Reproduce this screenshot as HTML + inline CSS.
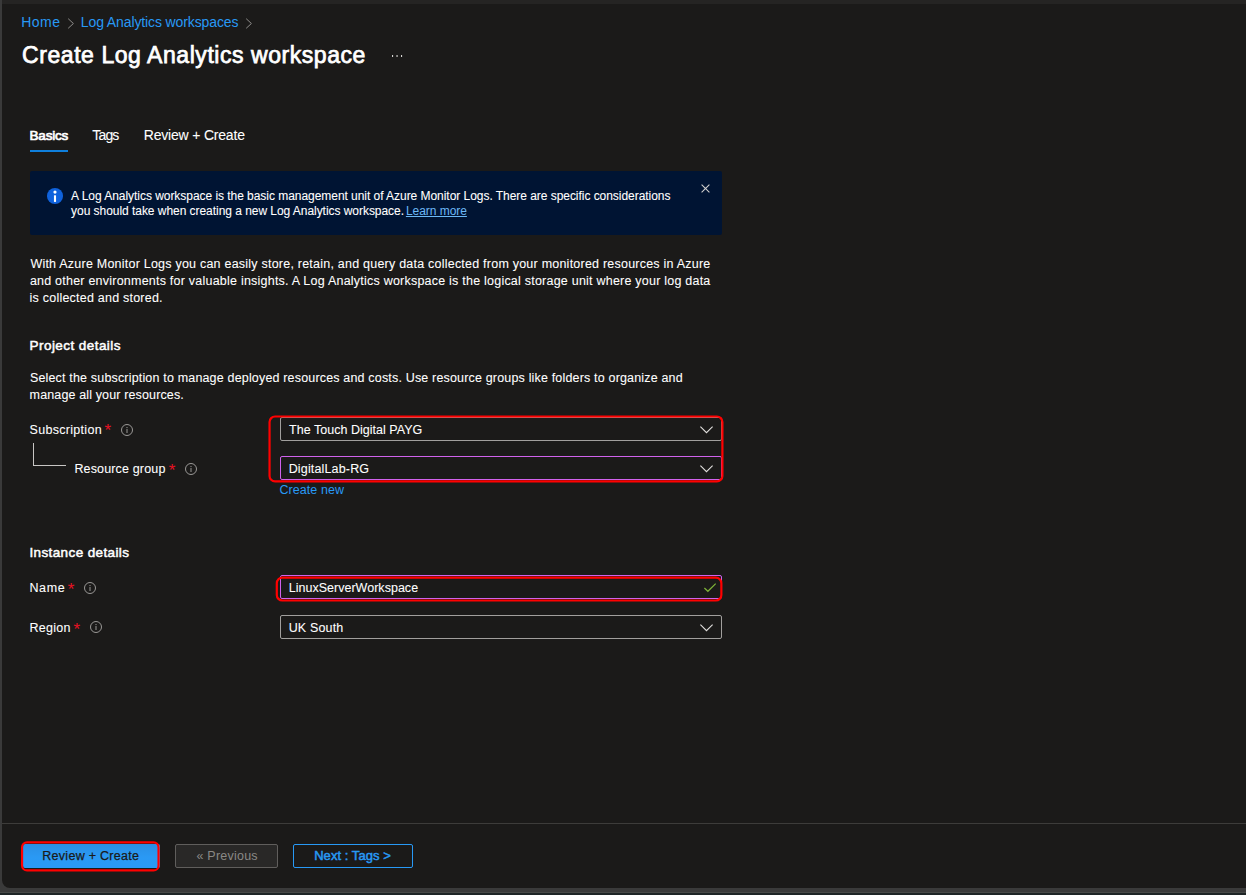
<!DOCTYPE html>
<html lang="en">
<head>
<meta charset="utf-8">
<title>Create Log Analytics workspace</title>
<style>
html,body{margin:0;padding:0;}
body{width:1246px;height:895px;overflow:hidden;background:#1b1a19;position:relative;font-family:"Liberation Sans",sans-serif;}
.abs{position:absolute;}
.t{position:absolute;white-space:pre;line-height:20px;font-family:"Liberation Sans",sans-serif;}
.inp{position:absolute;box-sizing:border-box;height:24px;left:280px;width:442px;border:1px solid #a19f9d;border-radius:2px;background:#1b1a19;}
.red{position:absolute;box-sizing:border-box;border:2.3px solid #ff0000;border-radius:6.5px;}
svg{position:absolute;overflow:visible;}
</style>
</head>
<body>
<!-- window chrome strips -->
<div class="abs" style="left:0;top:0;width:1246px;height:4px;background:#252423;"></div>
<div class="abs" style="left:0;top:888px;width:1246px;height:4px;background:#3a3a3a;"></div>
<div class="abs" style="left:0;top:892px;width:1246px;height:1px;background:#474948;"></div>
<div class="abs" style="left:0;top:893px;width:1246px;height:2px;background:#1e2526;"></div>
<div class="abs" style="left:0;top:0;width:2px;height:892px;background:#3a3a3a;"></div>
<!-- bottom-left rounded corner -->
<div class="abs" style="left:2px;top:880px;width:8px;height:8px;background:#3a3a3a;"></div>
<div class="abs" style="left:2px;top:872px;width:16px;height:16px;border-radius:0 0 0 8px;background:#1b1a19;"></div>

<!-- breadcrumb chevrons -->
<svg style="left:67px;top:17.5px" width="8" height="12" viewBox="0 0 8 12"><path d="M1.2 0.7 L6.4 5.5 L1.2 10.3" fill="none" stroke="#8f8d8b" stroke-width="1"/></svg>
<svg style="left:245.3px;top:17.5px" width="8" height="12" viewBox="0 0 8 12"><path d="M1.2 0.7 L6.4 5.5 L1.2 10.3" fill="none" stroke="#8f8d8b" stroke-width="1"/></svg>

<!-- ellipsis -->
<svg style="left:390px;top:53px" width="14" height="6" viewBox="0 0 14 6"><rect x="2" y="2" width="1.1" height="2" fill="#d6d4d2"/><rect x="6.5" y="2" width="1.1" height="2" fill="#d6d4d2"/><rect x="11" y="2" width="1.1" height="2" fill="#d6d4d2"/></svg>

<!-- tab underline -->
<div class="abs" style="left:30px;top:150px;width:38px;height:2px;background:#0f7fdc;"></div>

<!-- info box -->
<div class="abs" style="left:30px;top:171px;width:692px;height:64px;background:#001433;border-radius:2px;"></div>
<svg style="left:47px;top:188px" width="16" height="16" viewBox="0 0 16 16"><circle cx="8" cy="8" r="8.05" fill="#0f62dc"/><rect x="6.95" y="7.3" width="2.1" height="6.6" fill="#fff"/><circle cx="8" cy="4.1" r="1.6" fill="#fff"/></svg>
<svg style="left:700.5px;top:183.5px" width="9" height="9" viewBox="0 0 9 9"><path d="M0.6 0.6 L8.4 8.4 M8.4 0.6 L0.6 8.4" fill="none" stroke="#d2d0ce" stroke-width="1.05"/></svg>

<!-- tree connector -->
<div class="abs" style="left:33px;top:443px;width:33px;height:22.5px;box-sizing:border-box;border-left:1px solid #c8c6c4;border-bottom:1px solid #c8c6c4;"></div>

<!-- required asterisks -->
<span class="t" style="left:104.4px;top:421px;font-size:17px;color:#e81123;">*</span>
<span class="t" style="left:168.8px;top:461px;font-size:17px;color:#e81123;">*</span>
<span class="t" style="left:67.7px;top:580px;font-size:17px;color:#e81123;">*</span>
<span class="t" style="left:73.5px;top:620px;font-size:17px;color:#e81123;">*</span>

<!-- info (i) icons -->
<svg style="left:121px;top:424px" width="12" height="12" viewBox="0 0 12 12"><circle cx="6" cy="6" r="5.5" fill="none" stroke="#9a9896" stroke-width="1"/><rect x="5.5" y="5" width="1" height="4" fill="#9a9896"/><rect x="5.5" y="3" width="1" height="1.1" fill="#9a9896"/></svg>
<svg style="left:185px;top:463px" width="12" height="12" viewBox="0 0 12 12"><circle cx="6" cy="6" r="5.5" fill="none" stroke="#9a9896" stroke-width="1"/><rect x="5.5" y="5" width="1" height="4" fill="#9a9896"/><rect x="5.5" y="3" width="1" height="1.1" fill="#9a9896"/></svg>
<svg style="left:84px;top:582px" width="12" height="12" viewBox="0 0 12 12"><circle cx="6" cy="6" r="5.5" fill="none" stroke="#9a9896" stroke-width="1"/><rect x="5.5" y="5" width="1" height="4" fill="#9a9896"/><rect x="5.5" y="3" width="1" height="1.1" fill="#9a9896"/></svg>
<svg style="left:90px;top:621px" width="12" height="12" viewBox="0 0 12 12"><circle cx="6" cy="6" r="5.5" fill="none" stroke="#9a9896" stroke-width="1"/><rect x="5.5" y="5" width="1" height="4" fill="#9a9896"/><rect x="5.5" y="3" width="1" height="1.1" fill="#9a9896"/></svg>

<!-- inputs -->
<div class="inp" style="top:417px;"></div>
<div class="inp" style="top:456px;border-color:#d062ec;"></div>
<div class="inp" style="top:575px;border-color:#d062ec;"></div>
<div class="inp" style="top:615px;"></div>

<!-- dropdown chevrons -->
<svg style="left:700px;top:425.5px" width="13" height="8" viewBox="0 0 13 8"><path d="M0.4 0.6 L6.5 6.7 L12.6 0.6" fill="none" stroke="#e1dfdd" stroke-width="1.1"/></svg>
<svg style="left:700px;top:464.5px" width="13" height="8" viewBox="0 0 13 8"><path d="M0.4 0.6 L6.5 6.7 L12.6 0.6" fill="none" stroke="#e1dfdd" stroke-width="1.1"/></svg>
<svg style="left:700px;top:623.8px" width="13" height="8" viewBox="0 0 13 8"><path d="M0.4 0.6 L6.5 6.7 L12.6 0.6" fill="none" stroke="#e1dfdd" stroke-width="1.1"/></svg>
<!-- green check -->
<svg style="left:704px;top:582.5px" width="12" height="9" viewBox="0 0 12 9"><path d="M0.4 5 L3.9 8.3 L11.7 0.6" fill="none" stroke="#7fb239" stroke-width="1.2"/></svg>

<!-- footer -->
<div class="abs" style="left:2px;top:823px;width:1244px;height:1px;background:#3d3c3a;"></div>
<div class="abs" style="left:23px;top:844px;width:137px;height:24px;background:linear-gradient(#2a8fe4,#2a99f4 55%,#2a9af6);border-radius:2px;"></div>
<div class="abs" style="left:175px;top:844px;width:103px;height:24px;box-sizing:border-box;background:#292827;border:1px solid #605e5c;border-radius:2px;"></div>
<div class="abs" style="left:293px;top:844px;width:120.2px;height:24px;box-sizing:border-box;border:1px solid #2899f5;border-radius:2px;"></div>

<!-- red highlight boxes -->
<svg style="left:0;top:0" width="1246" height="895" viewBox="0 0 1246 895"><g fill="none" stroke="#ff0000" stroke-width="2.2">
<rect x="269.55" y="416.5" width="452.85" height="64.95" rx="5.5"/>
<rect x="276.8" y="577.65" width="444.55" height="22.85" rx="5.5"/>
<rect x="22.05" y="842.4" width="136.5" height="28" rx="5"/>
</g></svg>

<!-- text -->
<span class="t" style="left:21.2px;top:12px;font-size:14px;font-weight:400;color:#2899f5;letter-spacing:0.500px;">Home</span>
<span class="t" style="left:80.8px;top:12px;font-size:14px;font-weight:400;color:#2899f5;letter-spacing:-0.113px;">Log Analytics workspaces</span>
<span class="t" style="left:22.1px;top:45px;font-size:23px;font-weight:400;color:#ffffff;letter-spacing:0.552px;-webkit-text-stroke:0.75px currentColor;">Create Log Analytics workspace</span>
<span class="t" style="left:29.6px;top:126px;font-size:13.5px;font-weight:400;color:#ffffff;letter-spacing:-0.230px;-webkit-text-stroke:0.7px currentColor;">Basics</span>
<span class="t" style="left:92.3px;top:125px;font-size:14px;font-weight:400;color:#ffffff;letter-spacing:-0.833px;-webkit-text-stroke:0.08px currentColor;">Tags</span>
<span class="t" style="left:143.8px;top:125px;font-size:14px;font-weight:400;color:#ffffff;letter-spacing:-0.196px;-webkit-text-stroke:0.08px currentColor;">Review + Create</span>
<span class="t" style="left:71.1px;top:186px;font-size:12px;font-weight:400;color:#ffffff;letter-spacing:-0.043px;-webkit-text-stroke:0.08px currentColor;">A Log Analytics workspace is the basic management unit of Azure Monitor Logs. There are specific considerations</span>
<span class="t" style="left:71.1px;top:201px;font-size:12px;font-weight:400;color:#ffffff;letter-spacing:-0.044px;-webkit-text-stroke:0.08px currentColor;">you should take when creating a new Log Analytics workspace.</span>
<span class="t" style="left:405.9px;top:201px;font-size:12px;font-weight:400;color:#6cb8f6;letter-spacing:-0.039px;text-decoration:underline;">Learn more</span>
<span class="t" style="left:30.4px;top:254px;font-size:12.5px;font-weight:400;color:#ffffff;letter-spacing:0.225px;-webkit-text-stroke:0.08px currentColor;">With Azure Monitor Logs you can easily store, retain, and query data collected from your monitored resources in Azure</span>
<span class="t" style="left:29.9px;top:271px;font-size:12.5px;font-weight:400;color:#ffffff;letter-spacing:0.225px;-webkit-text-stroke:0.08px currentColor;">and other environments for valuable insights. A Log Analytics workspace is the logical storage unit where your log data</span>
<span class="t" style="left:29.6px;top:288px;font-size:12.5px;font-weight:400;color:#ffffff;letter-spacing:0.222px;-webkit-text-stroke:0.08px currentColor;">is collected and stored.</span>
<span class="t" style="left:29.6px;top:336px;font-size:13.5px;font-weight:400;color:#ffffff;letter-spacing:0.432px;-webkit-text-stroke:0.5px currentColor;">Project details</span>
<span class="t" style="left:29.9px;top:368px;font-size:12.5px;font-weight:400;color:#ffffff;letter-spacing:0.172px;-webkit-text-stroke:0.08px currentColor;">Select the subscription to manage deployed resources and costs. Use resource groups like folders to organize and</span>
<span class="t" style="left:29.6px;top:385px;font-size:12.5px;font-weight:400;color:#ffffff;letter-spacing:0.136px;-webkit-text-stroke:0.08px currentColor;">manage all your resources.</span>
<span class="t" style="left:29.5px;top:420px;font-size:12.5px;font-weight:400;color:#ffffff;letter-spacing:0.300px;-webkit-text-stroke:0.08px currentColor;">Subscription</span>
<span class="t" style="left:74.4px;top:459px;font-size:12.5px;font-weight:400;color:#ffffff;letter-spacing:0.154px;-webkit-text-stroke:0.08px currentColor;">Resource group</span>
<span class="t" style="left:289.1px;top:420px;font-size:12.5px;font-weight:400;color:#ffffff;letter-spacing:0.021px;-webkit-text-stroke:0.08px currentColor;">The Touch Digital PAYG</span>
<span class="t" style="left:288.7px;top:459px;font-size:12.5px;font-weight:400;color:#ffffff;letter-spacing:0.154px;-webkit-text-stroke:0.08px currentColor;">DigitalLab-RG</span>
<span class="t" style="left:279.4px;top:480px;font-size:12.5px;font-weight:400;color:#2899f5;letter-spacing:0.083px;">Create new</span>
<span class="t" style="left:29.4px;top:543px;font-size:13.5px;font-weight:400;color:#ffffff;letter-spacing:0.387px;-webkit-text-stroke:0.5px currentColor;">Instance details</span>
<span class="t" style="left:29.4px;top:578px;font-size:12.5px;font-weight:400;color:#ffffff;letter-spacing:0.650px;-webkit-text-stroke:0.08px currentColor;">Name</span>
<span class="t" style="left:29.4px;top:618px;font-size:12.5px;font-weight:400;color:#ffffff;letter-spacing:0.280px;-webkit-text-stroke:0.08px currentColor;">Region</span>
<span class="t" style="left:288.7px;top:578px;font-size:12.5px;font-weight:400;color:#ffffff;letter-spacing:0.021px;-webkit-text-stroke:0.08px currentColor;">LinuxServerWorkspace</span>
<span class="t" style="left:288.7px;top:618px;font-size:12.5px;font-weight:400;color:#ffffff;letter-spacing:0.150px;-webkit-text-stroke:0.08px currentColor;">UK South</span>
<span class="t" style="left:42.3px;top:846px;font-size:12.5px;font-weight:400;color:#1b1a19;letter-spacing:0.275px;-webkit-text-stroke:0.25px currentColor;">Review + Create</span>
<span class="t" style="left:196.5px;top:846px;font-size:12.5px;font-weight:400;color:#8a8886;letter-spacing:0.222px;">« Previous</span>
<span class="t" style="left:314.2px;top:846px;font-size:13px;font-weight:400;color:#2899f5;letter-spacing:0.046px;-webkit-text-stroke:0.5px currentColor;">Next : Tags &gt;</span>
</body>
</html>
